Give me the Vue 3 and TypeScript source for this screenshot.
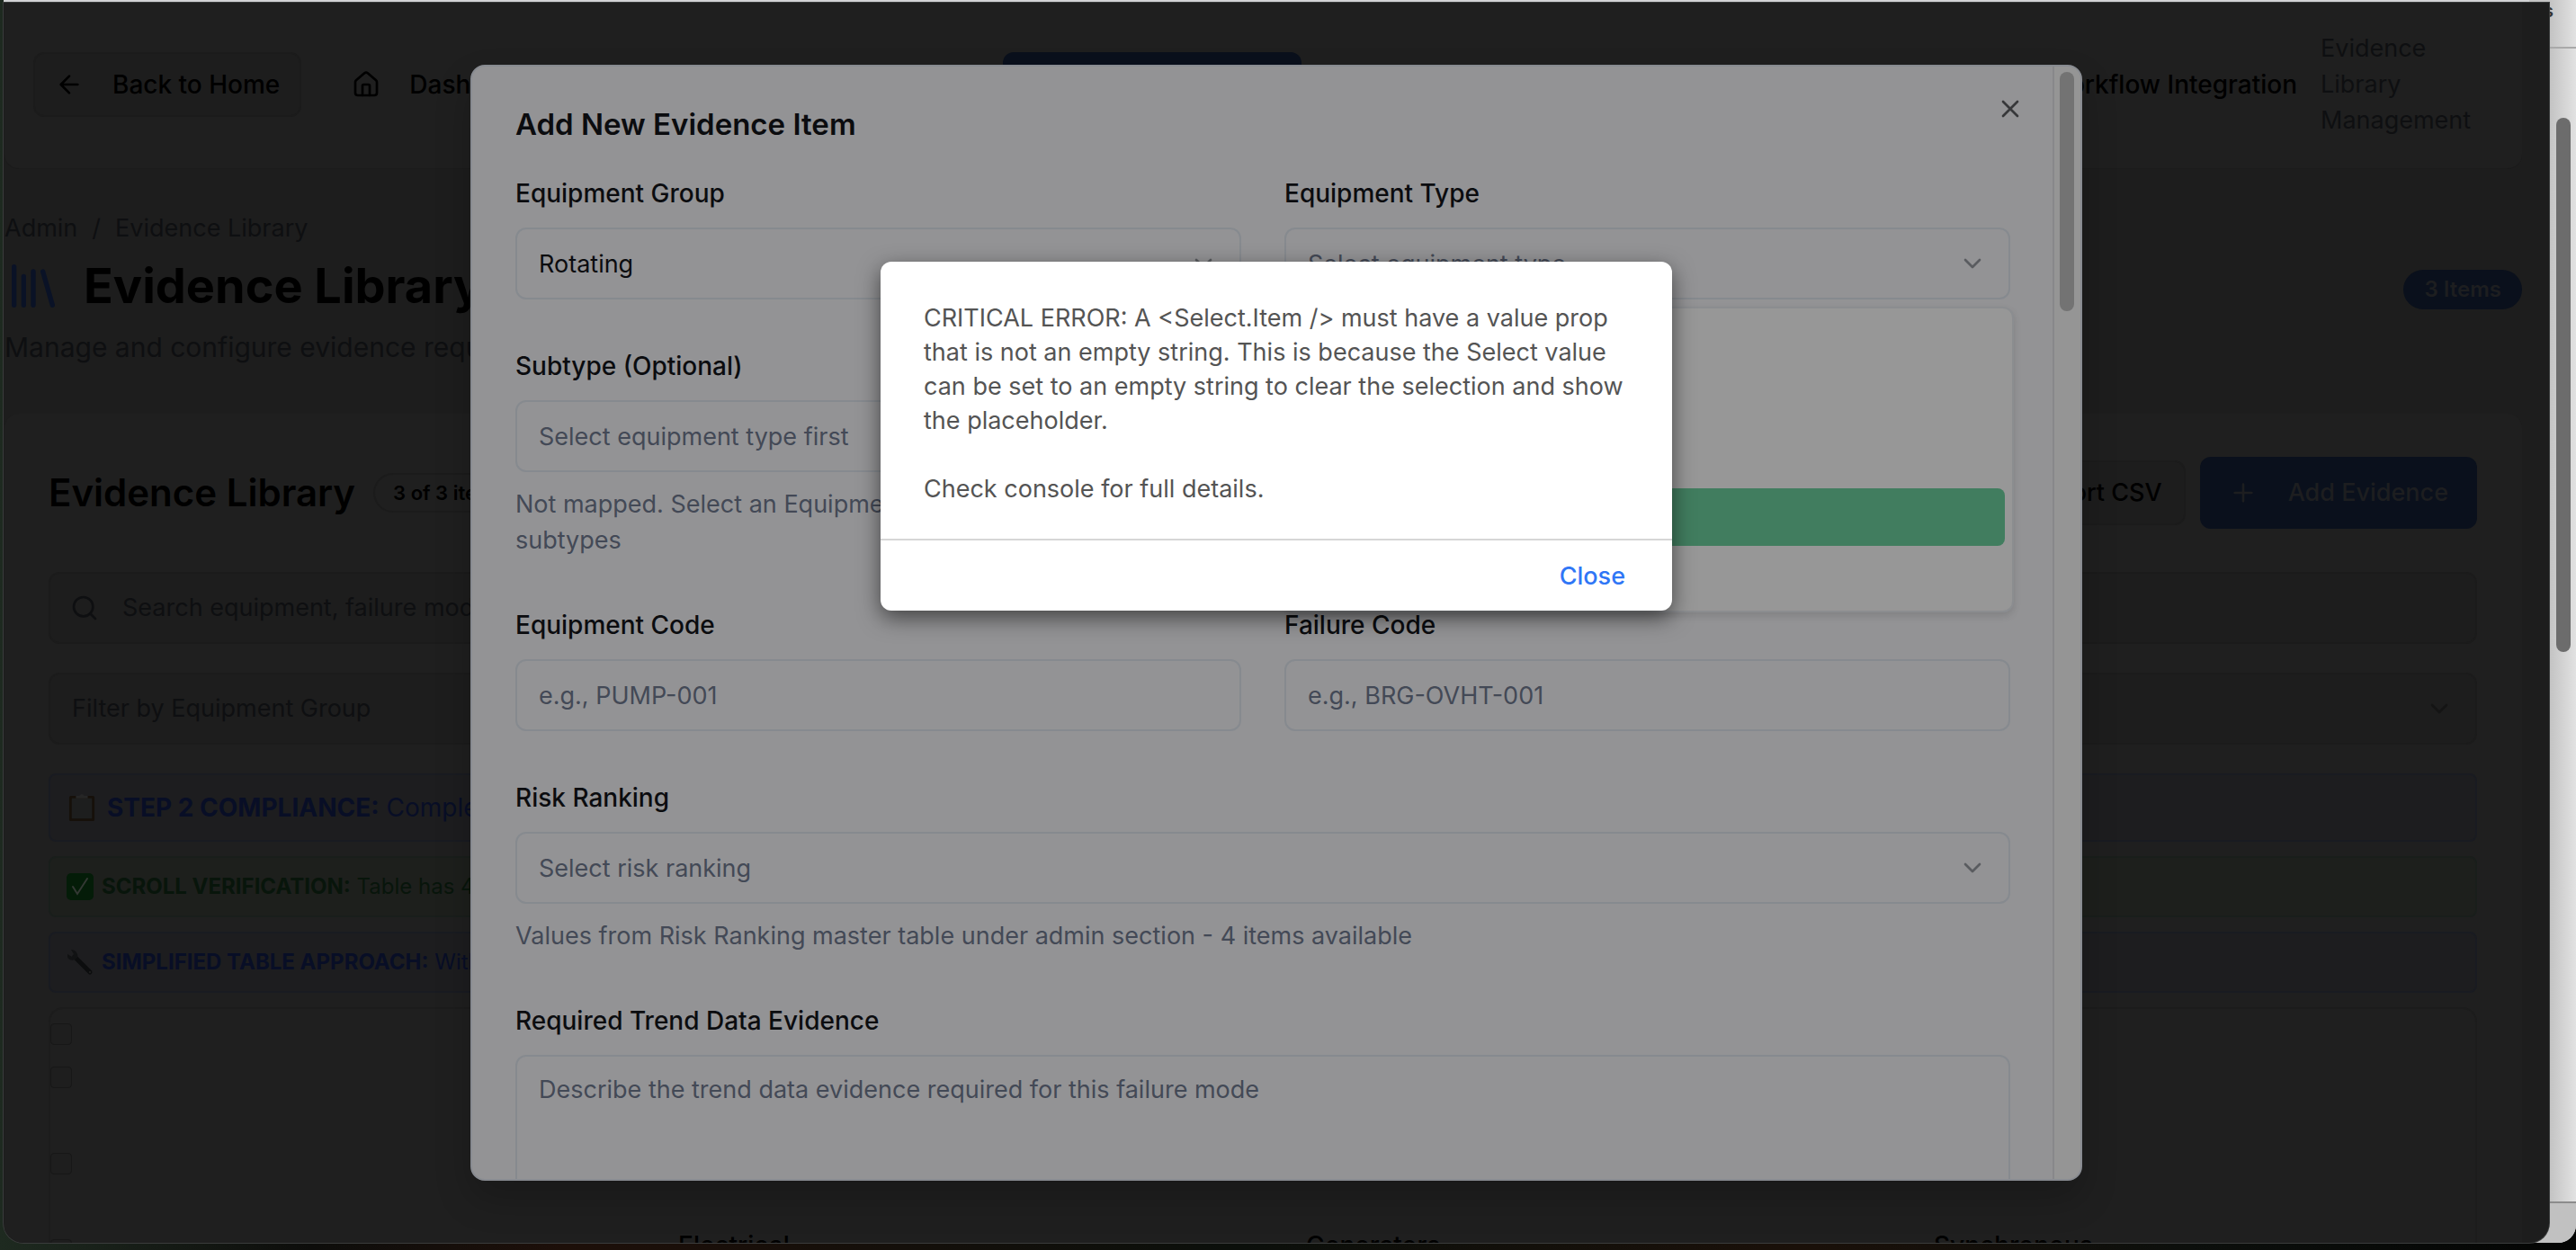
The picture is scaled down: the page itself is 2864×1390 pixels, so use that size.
<script setup lang="ts">
import { ref } from 'vue'

interface Notice {
  kind: 'blue' | 'green'
  icon: 'clipboard' | 'check' | 'wrench'
  title: string
  text: string
  large?: boolean
}

const notices: Notice[] = [
  { kind: 'blue', icon: 'clipboard', title: 'STEP 2 COMPLIANCE:', text: 'Complete', large: true },
  { kind: 'green', icon: 'check', title: 'SCROLL VERIFICATION:', text: 'Table has 4' },
  { kind: 'blue', icon: 'wrench', title: 'SIMPLIFIED TABLE APPROACH:', text: 'With' },
]

const rows = [
  { id: 'all', cells: [] as string[], short: true },
  { id: 'first', cells: [], short: false },
  { id: 'second', cells: [], short: false },
  { id: 'third', cells: ['Electrical', 'Generators', 'Synchronous'], short: false },
]

const group = ref('Rotating')
const equipmentType = ref('')
const subtype = ref('')
const risk = ref('')
const alertOpen = ref(true)
</script>

<template>
  <div class="desktop">
    <aside class="back-window">
      <div class="back-top">s</div>
      <div class="back-body"><div class="back-thumb"></div></div>
      <div class="back-foot"></div>
    </aside>

    <div class="window">
      <nav class="nav">
        <button class="btn back" type="button">
          <svg class="ic" viewBox="0 0 24 24"><path d="m12 19-7-7 7-7M19 12H5" /></svg>
          Back to Home
        </button>
        <a class="nav-link" href="#">
          <svg class="ic" viewBox="0 0 24 24"><path d="M15 21v-8a1 1 0 0 0-1-1h-4a1 1 0 0 0-1 1v8" /><path d="M3 10a2 2 0 0 1 .7-1.5l7-6a2 2 0 0 1 2.6 0l7 6A2 2 0 0 1 21 10v9a2 2 0 0 1-2 2H5a2 2 0 0 1-2-2z" /></svg>
          Dashboard
        </a>
        <a class="nav-active" href="#" aria-label="Evidence"></a>
        <a class="nav-flow" href="#">Workflow Integration</a>
        <span class="nav-note">Evidence Library Management</span>
      </nav>

      <header class="head">
        <div>
          <div class="crumbs"><span>Admin</span><span>/</span><span>Evidence Library</span></div>
          <h1>
            <svg class="books" viewBox="0 0 24 24"><path d="m16 6 4 14M12 6v14M8 8v12M4 4v16" /></svg>
            Evidence Library
          </h1>
          <p>Manage and configure evidence requirements</p>
        </div>
        <span class="pill">3 Items</span>
      </header>

      <main class="card">
        <div class="card-head">
          <h2>Evidence Library</h2>
          <span class="count">3 of 3 items</span>
          <span class="grow"></span>
          <button class="btn export" type="button">Export CSV</button>
          <button class="btn add" type="button">
            <svg class="ic" viewBox="0 0 24 24"><path d="M5 12h14M12 5v14" /></svg>
            Add Evidence
          </button>
        </div>

        <label class="dark-field">
          <svg class="ic" viewBox="0 0 24 24"><circle cx="11" cy="11" r="8" /><path d="m21 21-4.3-4.3" /></svg>
          <input type="text" placeholder="Search equipment, failure modes" aria-label="Search equipment" />
        </label>
        <label class="dark-field filter">
          <select aria-label="Filter by Equipment Group"><option>Filter by Equipment Group</option></select>
          <svg class="ic" viewBox="0 0 24 24"><path d="m6 9 6 6 6-6" /></svg>
        </label>

        <div v-for="n in notices" :key="n.title" class="notice" :class="[n.kind, { large: n.large }]">
          <svg v-if="n.icon === 'clipboard'" class="emoji" viewBox="0 0 32 34">
            <rect x="1" y="3" width="30" height="30" rx="2" fill="#16100a" />
            <rect x="4" y="6" width="24" height="24" fill="#1d1e1e" />
            <path d="M9 6V3h4q3-4 6 0h4v3z" fill="#262626" />
          </svg>
          <svg v-else-if="n.icon === 'check'" class="emoji" viewBox="0 0 30 30">
            <rect width="30" height="30" rx="5" fill="#041c08" />
            <path d="m7 15 5 8L23 6" fill="none" stroke="#333833" stroke-width="2" stroke-linecap="round" />
          </svg>
          <svg v-else class="emoji" viewBox="0 0 30 30">
            <path d="m9 9 17 17" stroke="#0c0d0e" stroke-width="5" stroke-linecap="round" />
            <path d="M5 1a7 7 0 0 1 7 9 7 7 0 0 1-10 1 7 7 0 0 1-1-5l5 3 2-3z" fill="#111213" />
            <circle cx="26" cy="26" r="1" fill="#222" />
          </svg>
          <span><strong>{{ n.title }}</strong> {{ n.text }}</span>
        </div>

        <table class="table">
          <tbody>
            <tr v-for="r in rows" :key="r.id" :class="{ short: r.short }">
              <td class="tick"><input type="checkbox" :aria-label="`Select ${r.id}`" /></td>
              <td v-for="i in 3" :key="i">{{ r.cells[i - 1] }}</td>
            </tr>
          </tbody>
        </table>
      </main>

      <section class="dialog" role="dialog" aria-labelledby="dialog-title">
        <form class="dialog-body" @submit.prevent>
          <h3 id="dialog-title">Add New Evidence Item</h3>
          <button class="x" type="button" aria-label="Close dialog">
            <svg class="ic" viewBox="0 0 24 24"><path d="M18 6 6 18M6 6l12 12" /></svg>
          </button>

          <div class="grid">
            <div class="field">
              <label for="group">Equipment Group</label>
              <div class="control">
                <select id="group" v-model="group"><option>Rotating</option></select>
                <svg class="ic chev" viewBox="0 0 24 24"><path d="m6 9 6 6 6-6" /></svg>
              </div>
            </div>
            <div class="field">
              <label for="type">Equipment Type</label>
              <div class="control">
                <select id="type" v-model="equipmentType" class="empty"><option value="">Select equipment type</option></select>
                <svg class="ic chev" viewBox="0 0 24 24"><path d="m6 9 6 6 6-6" /></svg>
                <div class="popover"><div class="option"></div></div>
              </div>
            </div>
            <div class="field">
              <label for="subtype">Subtype (Optional)</label>
              <div class="control">
                <select id="subtype" v-model="subtype" class="empty"><option value="">Select equipment type first</option></select>
              </div>
              <p>Not mapped. Select an Equipment Type to load the mapped subtypes</p>
            </div>
            <div class="field"></div>
            <div class="field">
              <label for="code">Equipment Code</label>
              <div class="control"><input id="code" type="text" placeholder="e.g., PUMP-001" /></div>
            </div>
            <div class="field">
              <label for="failure">Failure Code</label>
              <div class="control"><input id="failure" type="text" placeholder="e.g., BRG-OVHT-001" /></div>
            </div>
            <div class="field wide">
              <label for="risk">Risk Ranking</label>
              <div class="control">
                <select id="risk" v-model="risk" class="empty"><option value="">Select risk ranking</option></select>
                <svg class="ic chev" viewBox="0 0 24 24"><path d="m6 9 6 6 6-6" /></svg>
              </div>
              <p>Values from Risk Ranking master table under admin section - 4 items available</p>
            </div>
            <div class="field wide">
              <label for="trend">Required Trend Data Evidence</label>
              <textarea id="trend" placeholder="Describe the trend data evidence required for this failure mode"></textarea>
            </div>
          </div>
        </form>
        <div class="track"><div class="thumb"></div></div>
      </section>

      <section v-if="alertOpen" class="alert" role="alertdialog" aria-label="Critical error">
        <div class="alert-text">
          <p>CRITICAL ERROR: A &lt;Select.Item /&gt; must have a value prop that is not an empty string. This is because the Select value can be set to an empty string to clear the selection and show the placeholder.</p>
          <p>Check console for full details.</p>
        </div>
        <footer><button type="button" @click="alertOpen = false">Close</button></footer>
      </section>
    </div>
  </div>
</template>

<style>
body {
  margin: 0;
  background: #0e130f;
}
</style>

<style scoped>
* {
  box-sizing: border-box;
}
h1, h2, h3, p {
  margin: 0;
}
button, input, select, textarea {
  font: inherit;
  color: inherit;
  margin: 0;
}
a {
  color: inherit;
  text-decoration: none;
}
.desktop {
  position: relative;
  height: 100vh;
  overflow: hidden;
  padding: 3px 30px 8px 4px;
  background: linear-gradient(90deg, #1e2a20, #0d0d0b 12%, #1d0f09 22%, #0b0f0b 48%, #1a1009 70%, #0c0f0c 85%, #040504);
  font-family: Inter, "Noto Sans", sans-serif;
  font-size: 27px;
  line-height: 40px;
  color: #000;
}
.desktop::before {
  content: '';
  position: absolute;
  inset: 0 29px auto 4px;
  height: 2px;
  background: #d2d3d5;
}
.ic {
  width: 32px;
  height: 32px;
  flex: none;
  fill: none;
  stroke: currentColor;
  stroke-width: 2;
  stroke-linecap: round;
  stroke-linejoin: round;
}
.back-window {
  position: absolute;
  inset: 0 0 8px auto;
  width: 52px;
  display: flex;
  flex-direction: column;
  border-radius: 0 0 20px 0;
  overflow: hidden;
  background: linear-gradient(90deg, #c4c4c4 45%, #e2e2e2);
}
.back-top {
  height: 54px;
  padding: 0 0 0 16px;
  border-bottom: 2px solid #a9a9a9;
  font-size: 20px;
  font-weight: 600;
  line-height: 24px;
  color: #333;
}
.back-body {
  flex: 1;
  padding: 77px 6px 0 30px;
}
.back-thumb {
  height: 594px;
  border-radius: 8px;
  background: #6c6c6c;
}
.back-foot {
  height: 46px;
  border-top: 2px solid #8c8c8c;
  background: #c1c1c1;
}
.window {
  position: relative;
  height: 100%;
  overflow: hidden;
  padding: 0 30px 0 1px;
  border-radius: 0 0 22px 22px;
  background: #1d1d1d;
  box-shadow: 0 0 0 1px #3a3c3c;
}
.nav {
  display: flex;
  align-items: center;
  padding: 31px 32px 33px;
  border-bottom: 1px solid #1b1b1b;
  border-radius: 0 0 16px 16px;
  background: #1f1f1f;
  font-size: 28px;
  font-weight: 500;
}
.btn {
  display: flex;
  align-items: center;
  height: 72px;
  border: 2px solid #1b1b1b;
  border-radius: 12px;
  background: #1d1d1d;
  font-weight: 500;
}
.back {
  gap: 32px;
  padding: 0 22px;
}
.nav-link {
  flex: 0 0 724px;
  display: flex;
  align-items: center;
  gap: 32px;
  margin-left: 56px;
}
.nav-active {
  width: 332px;
  height: 72px;
  border-radius: 12px;
  background: #0a101c;
}
.nav-flow {
  margin-left: auto;
}
.nav-note {
  width: 192px;
  margin-left: 26px;
  font-size: 27px;
  font-weight: 400;
  color: #0e0f11;
}
.head {
  display: flex;
  align-items: center;
  justify-content: space-between;
  padding: 46px 0 50px;
}
.crumbs {
  display: flex;
  gap: 16px;
  color: #0e0f11;
}
h1 {
  display: flex;
  align-items: center;
  gap: 24px;
  margin: 8px 0;
  font-size: 54px;
  line-height: 72px;
  font-weight: 700;
}
.books {
  width: 64px;
  height: 72px;
  fill: none;
  stroke: #0a1226;
  stroke-width: 2;
  stroke-linecap: round;
}
.head p {
  font-size: 30px;
  line-height: 48px;
  color: #0e0f11;
}
.pill {
  padding: 2px 23px;
  border-radius: 22px;
  background: #0a101c;
  color: #1d1e20;
  font-size: 24px;
  font-weight: 600;
}
.card {
  display: flex;
  flex-direction: column;
  padding: 48px 50px 0 49px;
  border-radius: 16px;
  background: #1f1f1f;
}
.card-head {
  display: flex;
  align-items: center;
  gap: 16px;
  height: 80px;
  margin-bottom: 48px;
}
h2 {
  font-size: 42px;
  line-height: 56px;
  font-weight: 600;
}
.count {
  margin-left: 4px;
  padding: 0 20px;
  border: 2px solid #1b1b1b;
  border-radius: 22px;
  font-size: 22px;
  font-weight: 600;
}
.grow {
  flex: 1;
}
.export {
  padding: 0 24px;
}
.add {
  gap: 34px;
  height: 80px;
  padding: 0 32px;
  border: 0;
  background: #0a101c;
  color: #1d1e20;
}
.dark-field {
  display: flex;
  align-items: center;
  gap: 26px;
  height: 80px;
  margin-bottom: 32px;
  padding: 0 24px 0 22px;
  border: 2px solid #1b1b1b;
  border-radius: 12px;
  background: #1d1d1d;
  color: #0e0f11;
}
.dark-field input,
.dark-field select {
  flex: 1;
  padding: 0;
  border: 0;
  appearance: none;
  background: none;
  opacity: 1;
}
.dark-field input::placeholder {
  color: inherit;
}
.filter {
  padding: 0 24px;
}
.filter .ic {
  color: #141414;
}
.notice {
  display: flex;
  align-items: center;
  gap: 9px;
  height: 68px;
  margin-bottom: 16px;
  padding: 0 18px;
  border: 2px solid #191b21;
  border-radius: 8px;
  background: #1d1d1f;
  color: #080e26;
  font-size: 24px;
}
.notice.green {
  border-color: #191e1b;
  background: #1d1f1c;
  color: #08150b;
}
.notice.large {
  gap: 13px;
  height: 76px;
  padding: 0 20px;
  font-size: 28px;
}
.notice strong {
  font-weight: 700;
}
.emoji {
  width: 30px;
  height: 32px;
}
.table {
  table-layout: fixed;
  width: 100%;
  border: 2px solid #1c1c1c;
  border-radius: 16px;
  border-spacing: 0;
  font-size: 28px;
  font-weight: 500;
}
.table td {
  width: 698px;
  height: 96px;
  padding: 0;
  vertical-align: top;
  line-height: 22px;
}
.table td:last-child {
  width: auto;
}
.table .short td {
  height: 60px;
}
.table .tick {
  padding-top: 4px;
}
.table .short .tick {
  padding-top: 16px;
}
.tick input {
  display: block;
  width: 24px;
  height: 24px;
  appearance: none;
  border: 1px solid #171717;
  border-radius: 4px;
  background: #1e1e1e;
}
.dialog {
  position: absolute;
  top: 5%;
  left: 50%;
  display: flex;
  width: 1792px;
  max-width: 90%;
  height: 90%;
  margin-left: -896px;
  overflow: hidden;
  border: 2px solid #888b91;
  border-radius: 16px;
  background: #939395;
  box-shadow: 0 20px 40px rgba(0, 0, 0, 0.2);
  color: #0b0c0f;
}
.dialog-body {
  position: relative;
  flex: 1;
  padding: 46px 47px 0 48px;
}
h3 {
  margin-bottom: 45px;
  font-size: 33px;
  line-height: 36px;
  font-weight: 600;
}
.x {
  position: absolute;
  top: 31px;
  right: 31px;
  display: flex;
  padding: 0;
  border: 0;
  background: none;
  color: #37383a;
}
.grid {
  display: grid;
  grid-template-columns: 1fr 1fr;
  gap: 60px 48px;
}
.wide {
  grid-column: 1 / -1;
}
.field label {
  display: block;
  margin-bottom: 24px;
  font-size: 28px;
  line-height: 28px;
  font-weight: 500;
}
.control {
  position: relative;
  height: 80px;
}
.control select,
.control input,
textarea {
  display: block;
  width: 100%;
  height: 80px;
  padding: 2px 24px 0;
  border: 2px solid #868a8f;
  border-radius: 12px;
  appearance: none;
  background: transparent;
  opacity: 1;
}
textarea {
  height: 240px;
  padding: 17px 24px;
  resize: none;
}
.empty,
.control input::placeholder,
textarea::placeholder,
.field p {
  color: #434956;
}
.field p {
  margin-top: 16px;
}
.chev {
  position: absolute;
  top: 24px;
  right: 26px;
  color: #5a5c60;
}
.popover {
  position: absolute;
  top: 88px;
  right: -4px;
  left: 0;
  z-index: 1;
  height: 340px;
  padding: 200px 8px 0;
  border: 2px solid #8b8d90;
  border-radius: 12px;
  background: #979797;
  box-shadow: 0 4px 8px rgba(0, 0, 0, 0.12);
}
.option {
  height: 64px;
  border-radius: 8px;
  background: #417d5f;
}
.track {
  width: 31px;
  padding: 6px 6px 0;
  border-left: 2px solid #88888a;
  background: #959595;
}
.thumb {
  width: 16px;
  height: 266px;
  border-radius: 8px;
  background: #737373;
}
.alert {
  position: absolute;
  top: 288px;
  left: 50%;
  z-index: 2;
  width: 880px;
  margin-left: -440px;
  border-radius: 12px;
  background: #fff;
  box-shadow: 0 8px 24px rgba(0, 0, 0, 0.55);
}
.alert-text {
  display: grid;
  gap: 38px;
  padding: 44px 48px 36px;
  line-height: 38px;
  color: #545454;
}
.alert footer {
  display: flex;
  justify-content: flex-end;
  height: 80px;
  padding: 0 52px;
  border-top: 2px solid #d6d6d6;
}
.alert button {
  padding: 2px 0 0;
  border: 0;
  background: none;
  color: #2f76f6;
  font-weight: 500;
}
</style>
